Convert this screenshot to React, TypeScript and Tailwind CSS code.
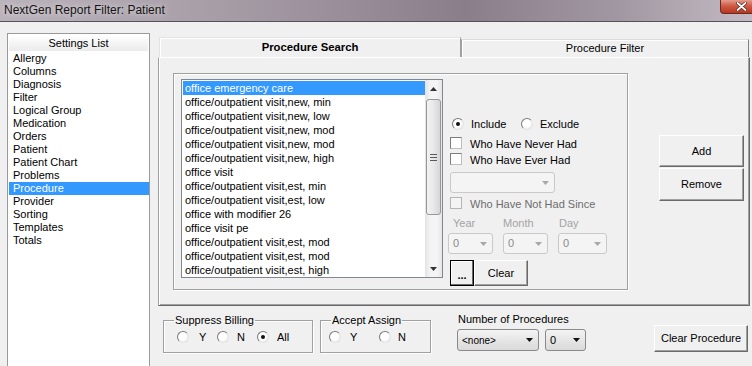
import React from "react";

const settings = [
  "Allergy",
  "Columns",
  "Diagnosis",
  "Filter",
  "Logical Group",
  "Medication",
  "Orders",
  "Patient",
  "Patient Chart",
  "Problems",
  "Procedure",
  "Provider",
  "Sorting",
  "Templates",
  "Totals",
];

const procedures = [
  "office emergency care",
  "office/outpatient visit,new, min",
  "office/outpatient visit,new, low",
  "office/outpatient visit,new, mod",
  "office/outpatient visit,new, mod",
  "office/outpatient visit,new, high",
  "office visit",
  "office/outpatient visit,est, min",
  "office/outpatient visit,est, low",
  "office with modifier 26",
  "office visit pe",
  "office/outpatient visit,est, mod",
  "office/outpatient visit,est, mod",
  "office/outpatient visit,est, high",
];

function Arrow({ down = true, color = "#1a1a1a" }: { down?: boolean; color?: string }) {
  return (
    <svg width="7" height="4" viewBox="0 0 7 4">
      <polygon points={down ? "0,0 7,0 3.5,4" : "0,4 7,4 3.5,0"} fill={color} />
    </svg>
  );
}

function Radio({ checked = false }: { checked?: boolean }) {
  return (
    <span className="inline-flex w-[12px] h-[12px] shrink-0 items-center justify-center rounded-full border border-t-[#7a7a7a] border-l-[#7a7a7a] border-r-[#e2e2e2] border-b-[#e2e2e2] bg-[radial-gradient(circle_at_40%_40%,#ffffff_40%,#e4e4e4)]">
      {checked && <span className="w-[4px] h-[4px] rounded-full bg-[#111]" />}
    </span>
  );
}

function Check({ disabled = false }: { disabled?: boolean }) {
  return (
    <span
      className={
        "inline-block w-[12px] h-[12px] shrink-0 border " +
        (disabled
          ? "border-[#b5b5b5] bg-[#f4f4f4]"
          : "border-t-[#7e7e7e] border-l-[#7e7e7e] border-r-[#bdbdbd] border-b-[#bdbdbd] bg-white")
      }
    />
  );
}

type ComboProps = {
  text?: string;
  className?: string;
  disabled?: boolean;
};

function Combo({ text = "", className = "", disabled = false }: ComboProps) {
  return (
    <div
      className={
        "flex items-center justify-between rounded-[3px] border pl-[4px] pr-[5px] " +
        (disabled
          ? "border-[#c9c9c9] bg-[#f4f4f4] text-[#8a8a8a] "
          : "border-[#8a8a8a] bg-[linear-gradient(180deg,#f3f3f3,#e6e6e6_50%,#dadada)] text-black ") +
        className
      }
    >
      <span>{text}</span>
      <Arrow color={disabled ? "#a8a8a8" : "#111"} />
    </div>
  );
}

function Button({ children, className = "" }: { children: React.ReactNode; className?: string }) {
  return (
    <div
      className={
        "flex items-center justify-center bg-[#f0f0f0] border border-t-white border-l-white border-r-[#6a6a6a] border-b-[#6a6a6a] shadow-[inset_-1px_-1px_0_#a0a0a0] " +
        className
      }
    >
      {children}
    </div>
  );
}

function ScrollBar() {
  return (
    <div className="flex flex-col w-[17px] h-full shrink-0 bg-[linear-gradient(90deg,#e3e3e3,#f4f4f4_30%,#f4f4f4_70%,#e6e6e6)]">
      <div className="flex h-[17px] items-center justify-center">
        <Arrow down={false} color="#333" />
      </div>
      <div className="mt-[2px] mx-[1px] h-[116px] rounded-[3px] border border-[#979797] bg-[linear-gradient(90deg,#f3f3f3,#e8e8e8_50%,#d6d6d6)] flex flex-col items-center justify-center gap-[2px]">
        <span className="block w-[7px] h-px bg-[#5a5a5a]" />
        <span className="block w-[7px] h-px bg-[#5a5a5a]" />
        <span className="block w-[7px] h-px bg-[#5a5a5a]" />
      </div>
      <div className="flex-1" />
      <div className="flex h-[17px] items-center justify-center">
        <Arrow color="#333" />
      </div>
    </div>
  );
}

export default function App() {
  return (
    <div className="w-[752px] h-[366px] overflow-hidden bg-[#f0f0f0] flex flex-col font-['Liberation_Sans',Arial,sans-serif] text-[11px] leading-[13px] text-black">
      {/* title bar */}
      <div className="flex items-start h-[22px] shrink-0 border-b border-[#55505a] bg-[linear-gradient(90deg,#bbb3bb_0%,#a69ca6_30%,#8a7e8b_62%,#a197a2_82%,#c3bac3_100%)]">
        <span className="ml-[4px] mt-[3px] text-[12px] leading-[14px] text-[#141414] [text-shadow:0_0_6px_rgba(255,255,255,0.8)]">
          NextGen Report Filter: Patient
        </span>
        <div className="ml-auto mr-[-11px] w-[43px] h-[14px] shrink-0 flex items-center justify-center rounded-bl-[4px] border border-t-0 border-[#6b2b21] bg-[linear-gradient(180deg,#e39c8d,#cf5b46_45%,#b8351f)]">
          <svg width="11" height="9" viewBox="0 0 11 9">
            <path d="M1.5 1 L9.5 8 M9.5 1 L1.5 8" stroke="#4a1a12" strokeWidth="3" strokeLinecap="round" />
            <path d="M1.5 1 L9.5 8 M9.5 1 L1.5 8" stroke="#fff" strokeWidth="1.8" strokeLinecap="round" />
          </svg>
        </div>
      </div>

      <div className="flex flex-1 min-h-0">
        {/* settings list */}
        <div className="ml-[7px] mt-[11px] w-[143px] h-[340px] shrink-0 border border-[#9a9a9a] bg-white">
          <div className="h-[16px] mx-[1px] mt-[1px] text-center leading-[16px] bg-[linear-gradient(180deg,#ffffff,#ebebeb)]">
            Settings List
          </div>
          <div className="pl-[1px] pt-[1px]">
            {settings.map((s) => (
              <div
                key={s}
                className={
                  "h-[13px] leading-[13px] pl-[4px] " +
                  (s === "Procedure" ? "bg-[#3399ff] text-white" : "")
                }
              >
                {s}
              </div>
            ))}
          </div>
        </div>

        {/* right side */}
        <div className="ml-[8px] w-[592px] shrink-0 flex flex-col">
          {/* tabs */}
          <div className="mt-[15px] flex items-end h-[20px]">
            <div className="ml-[1px] w-[302px] h-[20px] border-t border-l border-[#e3e3e3] border-r border-r-[#a0a0a0] shadow-[inset_1px_1px_0_#fff] flex items-center justify-center font-bold text-[11.3px]">
              Procedure Search
            </div>
            <div className="w-[288px] h-[18px] border-t border-l border-t-[#dcdcdc] border-l-[#a0a0a0] border-r border-r-[#808080] shadow-[inset_1px_1px_0_#fff] flex items-center justify-center">
              Procedure Filter
            </div>
          </div>

          {/* panel */}
          <div className="w-[592px] h-[249px] border border-l-[#a0a0a0] border-t-white border-r-[#6a6a6a] border-b-[#6a6a6a] shadow-[inset_1px_0_0_#fff,inset_-1px_-1px_0_#a0a0a0] flex items-start">
            <div className="ml-[14px] mt-[15px] w-[455px] h-[217px] border border-[#a0a0a0] shadow-[inset_1px_1px_0_#fff,1px_1px_0_#fff] flex items-start">
              {/* listbox */}
              <div className="ml-[7px] mt-[5px] w-[262px] h-[199px] border border-[#828790] bg-white flex">
                <div className="flex-1 pl-[1px] pt-[1px]">
                  {procedures.map((p, i) => (
                    <div
                      key={i}
                      className={
                        "h-[14px] leading-[14px] pl-[2px] whitespace-nowrap " +
                        (i === 0 ? "bg-[#3399ff] text-white" : "")
                      }
                    >
                      {p}
                    </div>
                  ))}
                </div>
                <ScrollBar />
              </div>

              {/* controls */}
              <div className="ml-[5px] flex flex-col">
                <div className="mt-[43px] h-[14px] flex items-center">
                  <div className="ml-[4px] w-[69px] flex items-center">
                    <Radio checked />
                    <span className="ml-[7px]">Include</span>
                  </div>
                  <div className="flex items-center">
                    <Radio />
                    <span className="ml-[7px]">Exclude</span>
                  </div>
                </div>
                <div className="mt-[7px] h-[12px] flex items-center">
                  <span className="ml-[2px]"><Check /></span>
                  <span className="ml-[8px]">Who Have Never Had</span>
                </div>
                <div className="mt-[4px] h-[12px] flex items-center">
                  <span className="ml-[2px]"><Check /></span>
                  <span className="ml-[8px]">Who Have Ever Had</span>
                </div>
                <Combo disabled className="mt-[6px] ml-[2px] w-[105px] h-[21px]" />
                <div className="mt-[5px] h-[12px] flex items-center">
                  <span className="ml-[2px]"><Check disabled /></span>
                  <span className="ml-[8px] text-[#6d6d6d]">Who Have Not Had Since</span>
                </div>
                <div className="mt-[7px] h-[12px] flex items-center text-[#a3a3a3]">
                  <span className="ml-[5px] w-[50px]">Year</span>
                  <span className="w-[56px]">Month</span>
                  <span>Day</span>
                </div>
                <div className="mt-[4px] flex">
                  <Combo disabled text="0" className="w-[45px] h-[21px]" />
                  <Combo disabled text="0" className="ml-[10px] w-[45px] h-[21px]" />
                  <Combo disabled text="0" className="ml-[10px] w-[49px] h-[21px]" />
                </div>
                <div className="mt-[6px] ml-[2px] flex">
                  <div className="w-[24px] h-[26px] border border-black bg-[#f0f0f0] shadow-[inset_-1px_-1px_0_#6a6a6a,inset_1px_1px_0_#fff] flex items-end justify-center pb-[6px] leading-[8px] font-bold">
                    ...
                  </div>
                  <Button className="w-[54px] h-[26px]">Clear</Button>
                </div>
              </div>
            </div>

            {/* add / remove */}
            <div className="ml-[31px] mt-[77px] flex flex-col">
              <Button className="w-[85px] h-[32px]">Add</Button>
              <Button className="mt-[1px] w-[85px] h-[33px]">Remove</Button>
            </div>
          </div>

          {/* bottom row */}
          <div className="flex items-start">
            <fieldset className="mt-[8px] ml-[5px] w-[150px] h-[39px] border border-[#a0a0a0] shadow-[inset_1px_1px_0_#fff,1px_1px_0_#fff]">
              <legend className="ml-[10px] px-[1px] leading-[13px]">Suppress Billing</legend>
              <div className="mt-[4px] ml-[13px] flex items-center h-[12px]">
                <div className="w-[40px] flex items-center">
                  <Radio />
                  <span className="ml-[10px]">Y</span>
                </div>
                <div className="w-[40px] flex items-center">
                  <Radio />
                  <span className="ml-[8px]">N</span>
                </div>
                <div className="flex items-center">
                  <Radio checked />
                  <span className="ml-[8px]">All</span>
                </div>
              </div>
            </fieldset>
            <fieldset className="mt-[8px] ml-[7px] w-[111px] h-[39px] border border-[#a0a0a0] shadow-[inset_1px_1px_0_#fff,1px_1px_0_#fff]">
              <legend className="ml-[10px] px-[1px] leading-[13px]">Accept Assign</legend>
              <div className="mt-[4px] ml-[8px] flex items-center h-[12px]">
                <div className="w-[50px] flex items-center">
                  <Radio />
                  <span className="ml-[9px]">Y</span>
                </div>
                <div className="flex items-center">
                  <Radio />
                  <span className="ml-[7px]">N</span>
                </div>
              </div>
            </fieldset>
            <div className="ml-[26px] mt-[7px] w-[129px] flex flex-col">
              <span className="ml-[1px]">Number of Procedures</span>
              <div className="mt-[3px] flex">
                <Combo text="<none>" className="w-[82px] h-[22px] text-[10px]" />
                <Combo text="0" className="ml-[6px] w-[41px] h-[22px]" />
              </div>
            </div>
            <Button className="ml-[68px] mt-[19px] w-[94px] h-[27px]">Clear Procedure</Button>
          </div>
        </div>
      </div>
    </div>
  );
}
